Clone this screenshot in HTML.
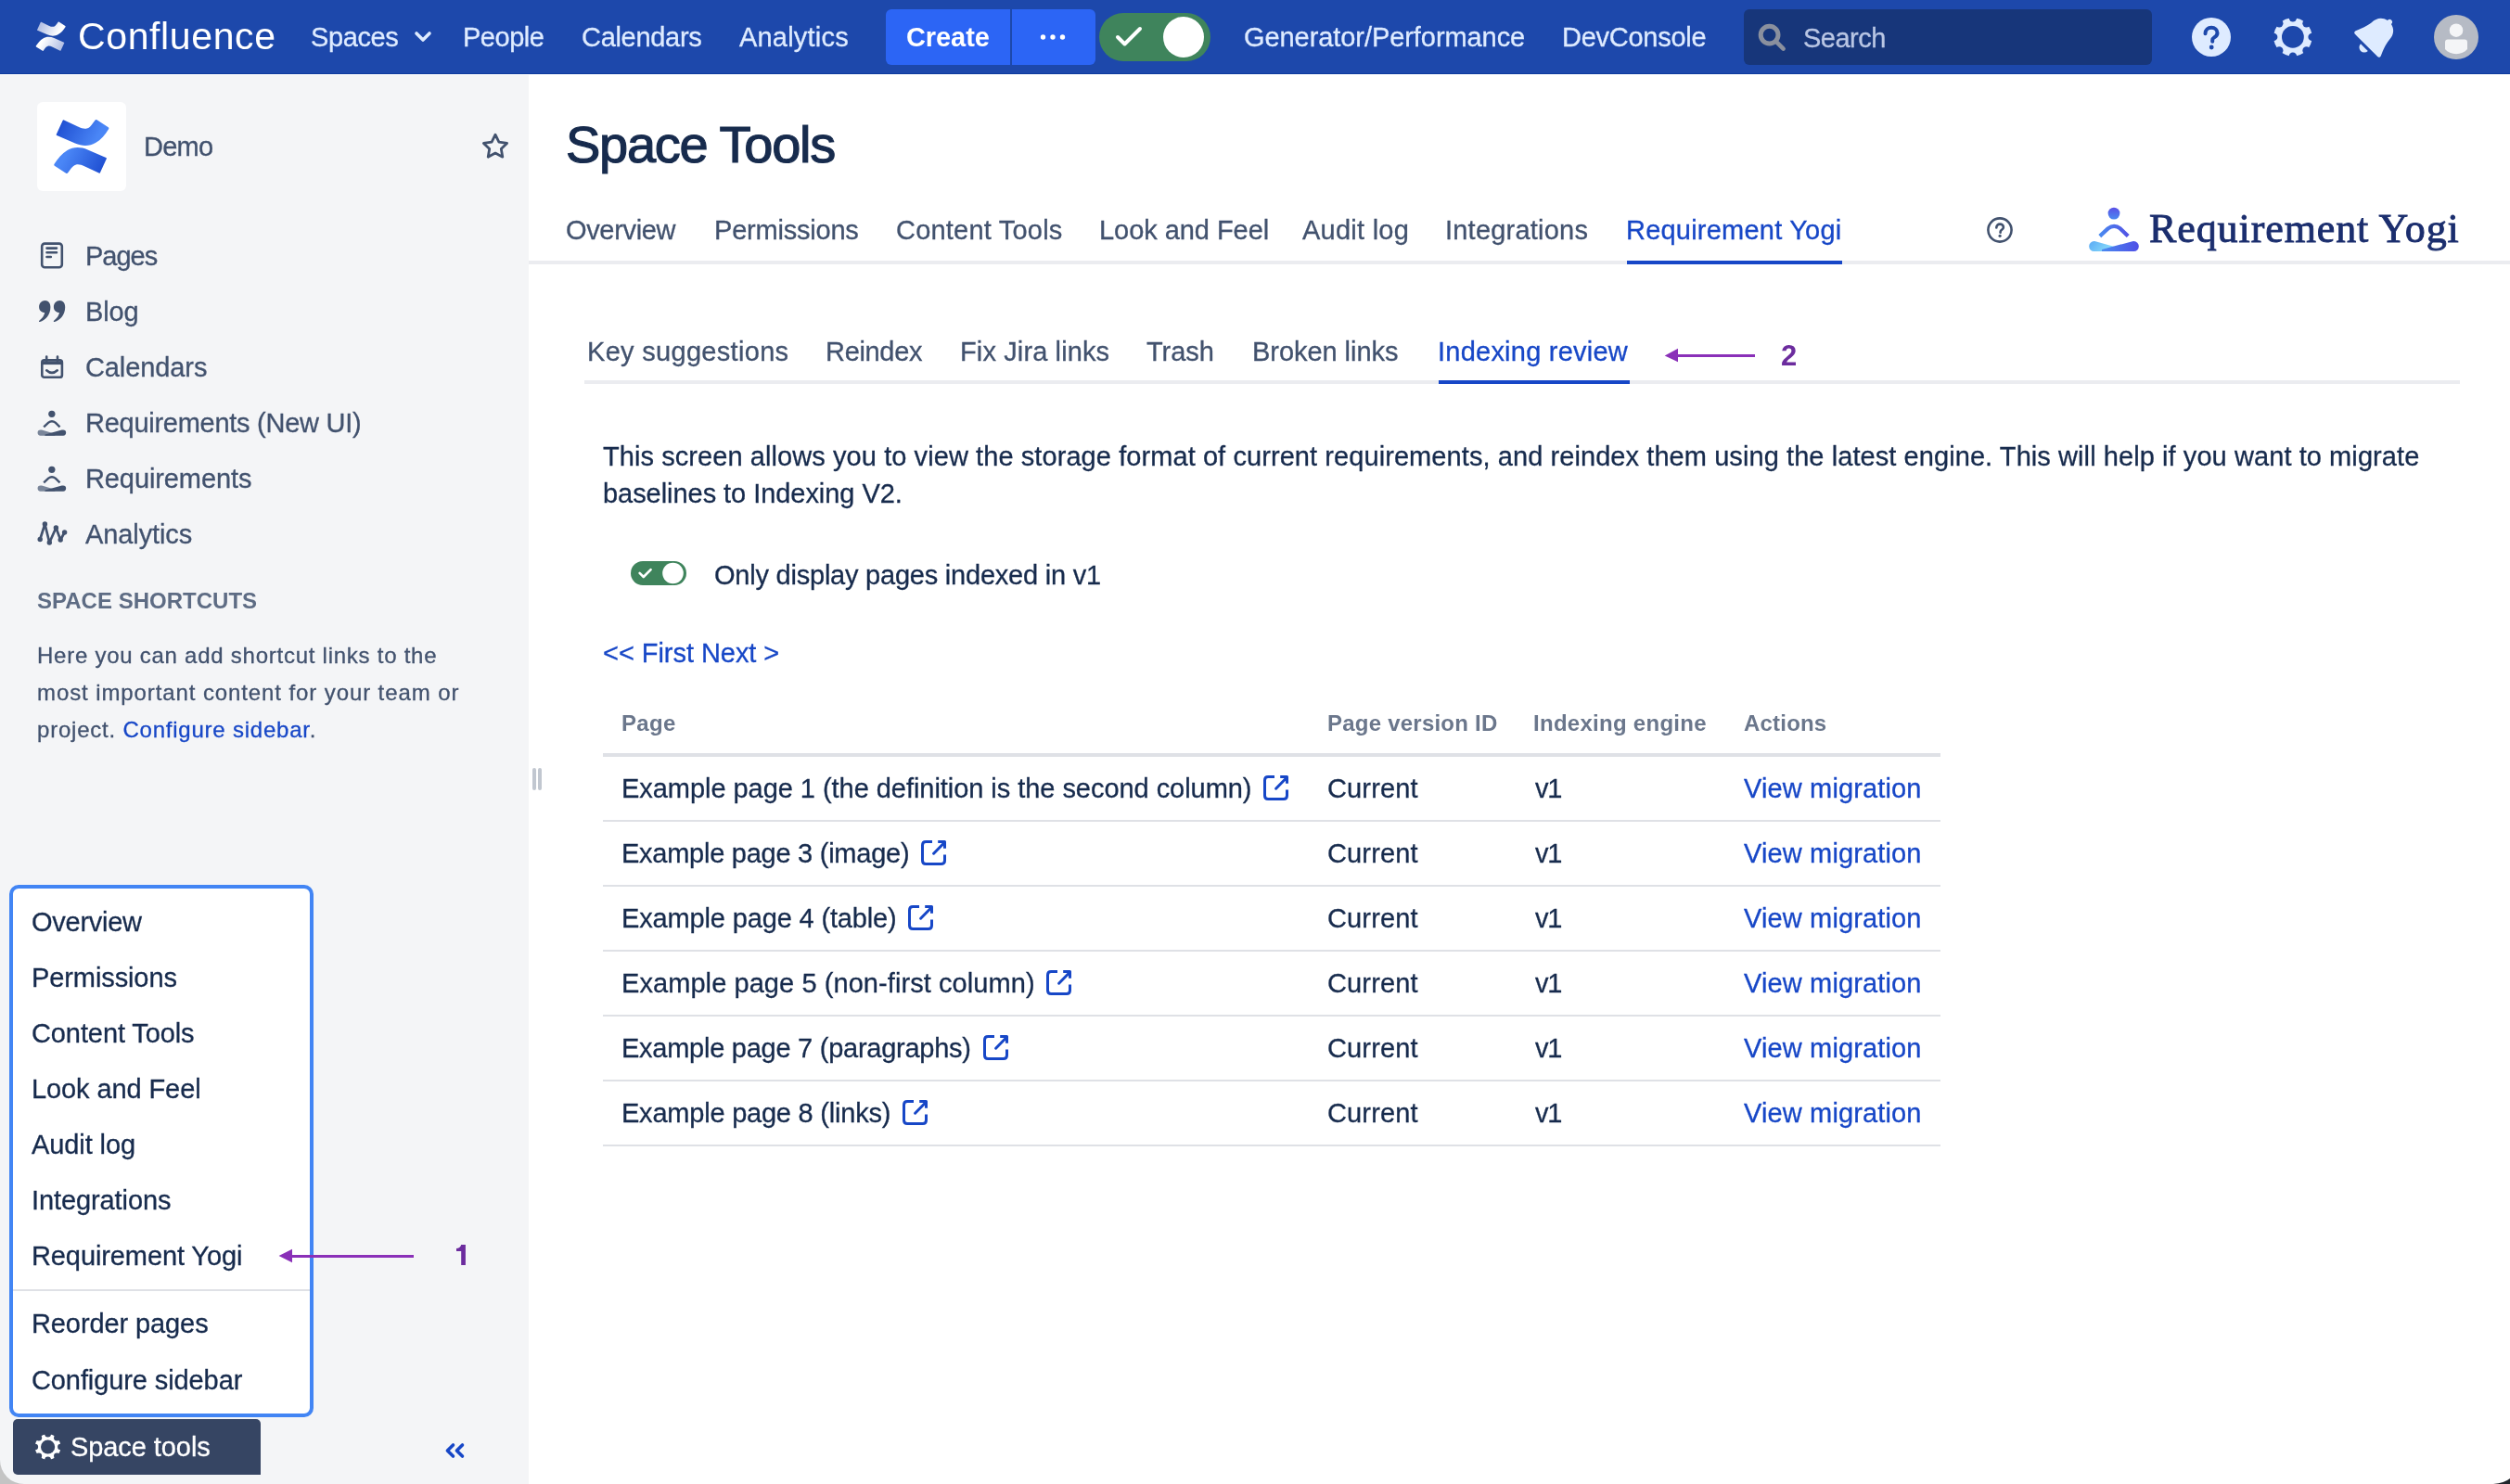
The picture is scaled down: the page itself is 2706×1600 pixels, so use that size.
<!DOCTYPE html><html><head><meta charset="utf-8"><style>*{margin:0;padding:0}html,body{width:2706px;height:1600px;overflow:hidden;background:#fff}
.t{position:absolute;line-height:0;white-space:nowrap;font-family:'Liberation Sans',sans-serif;will-change:transform;-webkit-text-stroke:0.3px currentColor}
.r{position:absolute;display:block}</style></head><body>
<div class="r" style="left:0px;top:0px;width:2706px;height:1600px;background:#FFFFFF;"></div>
<div class="r" style="left:0px;top:80px;width:570px;height:1520px;background:#F4F5F7;"></div>
<div class="r" style="left:0px;top:0px;width:2706px;height:80px;background:#1D48AB;"></div>
<div class="r" style="left:0px;top:79px;width:2706px;height:1px;background:#0D3A9E;"></div>
<div class="r" style="left:0px;top:80px;width:570px;height:1px;background:#FFFFFF;"></div>
<svg class="r" style="left:38px;top:22.6px;width:33px;height:33px" viewBox="0 0 61 61"><defs><linearGradient id="hg" gradientUnits="userSpaceOnUse" x1="8" y1="4" x2="46" y2="24"><stop offset="0" stop-color="#AEBBE2"/><stop offset="1" stop-color="#FFFFFF"/></linearGradient></defs><path fill="url(#hg)" d="M3.7,17.1 L10.7,1.8 Q11.2,1 12,1.4 L27,8.6 C31,10.5 34,11.2 36.5,10.6 C39,10 41,8 43,5 L45.6,1.4 Q46.3,.6 47.1,1.1 L59.8,9.2 Q60.8,9.9 60.2,10.9 C56,17.5 52,22.5 46,26 C40,29.5 32,30 24,26.5 L4.3,18.1 Q3.4,17.7 3.7,17.1 Z"/><g transform="rotate(180 30.8 30)"><path fill="url(#hg)" d="M3.7,17.1 L10.7,1.8 Q11.2,1 12,1.4 L27,8.6 C31,10.5 34,11.2 36.5,10.6 C39,10 41,8 43,5 L45.6,1.4 Q46.3,.6 47.1,1.1 L59.8,9.2 Q60.8,9.9 60.2,10.9 C56,17.5 52,22.5 46,26 C40,29.5 32,30 24,26.5 L4.3,18.1 Q3.4,17.7 3.7,17.1 Z"/></g></svg>
<div class="t" style="left:83.70px;top:39px;font-size:41px;color:#FFFFFF;letter-spacing:0.622px;-webkit-text-stroke:0;">Confluence</div>
<div class="t" style="left:335.30px;top:40px;font-size:29px;color:#DEEBFF;letter-spacing:-0.400px;">Spaces</div>
<svg class="r" style="left:446px;top:33px;width:20px;height:14px" viewBox="0 0 20 14"><path d="M3 3l7 7 7-7" fill="none" stroke="#DEEBFF" stroke-width="3.6" stroke-linecap="round" stroke-linejoin="round"/></svg>
<div class="t" style="left:498.70px;top:40px;font-size:29px;color:#DEEBFF;letter-spacing:-0.480px;">People</div>
<div class="t" style="left:626.70px;top:40px;font-size:29px;color:#DEEBFF;letter-spacing:-0.300px;">Calendars</div>
<div class="t" style="left:796.70px;top:40px;font-size:29px;color:#DEEBFF;letter-spacing:0.200px;">Analytics</div>
<div class="r" style="left:955px;top:10px;width:226px;height:60px;background:#2C65F5;border-radius:6px;"></div>
<div class="r" style="left:1089px;top:10px;width:2px;height:60px;background:#1D48AB;"></div>
<div class="t" style="left:976.70px;top:40px;font-size:29px;color:#FFFFFF;font-weight:700;-webkit-text-stroke:0;letter-spacing:-0.080px;">Create</div>
<svg class="r" style="left:1110px;top:30px;width:50px;height:20px" viewBox="0 0 50 20"><circle cx="14.5" cy="10" r="2.7" fill="#fff"/><circle cx="25" cy="10" r="2.7" fill="#fff"/><circle cx="35.5" cy="10" r="2.7" fill="#fff"/></svg>
<div class="r" style="left:1185px;top:14px;width:120px;height:52px;background:#3F845C;border-radius:26px;"></div>
<svg class="r" style="left:1252px;top:17px;width:48px;height:48px" viewBox="0 0 48 48"><circle cx="24" cy="23" r="22" fill="#fff"/></svg>
<svg class="r" style="left:1198px;top:25px;width:40px;height:30px" viewBox="0 0 40 30"><path d="M7 15l7.5 7.5L31 6" fill="none" stroke="#fff" stroke-width="4" stroke-linecap="round" stroke-linejoin="round"/></svg>
<div class="t" style="left:1340.70px;top:40px;font-size:29px;color:#DEEBFF;letter-spacing:-0.070px;">Generator/Performance</div>
<div class="t" style="left:1684.20px;top:40px;font-size:29px;color:#DEEBFF;letter-spacing:-0.267px;">DevConsole</div>
<div class="r" style="left:1880px;top:10px;width:440px;height:60px;background:#17367A;border-radius:6px;"></div>
<svg class="r" style="left:1890px;top:20px;width:40px;height:40px" viewBox="0 0 40 40"><circle cx="17.6" cy="17.6" r="9.4" fill="none" stroke="#8A909E" stroke-width="5"/><path d="M24.6 24.6l8 8" stroke="#8A909E" stroke-width="4.6" stroke-linecap="round"/></svg>
<div class="t" style="left:1943.70px;top:41px;font-size:29px;color:#B9C6E4;letter-spacing:-0.520px;">Search</div>
<svg class="r" style="left:2362px;top:18px;width:44px;height:44px" viewBox="0 0 44 44"><circle cx="22" cy="22" r="21" fill="#DEEBFF"/><path d="M15.5 18.2c0-4 3-6.4 6.6-6.4 3.7 0 6.4 2.4 6.4 5.6 0 2.6-1.6 3.9-3.4 5-1.3.8-1.9 1.5-1.9 2.9v1.4" fill="none" stroke="#1D48AB" stroke-width="4" stroke-linecap="round"/><circle cx="22.2" cy="33" r="2.4" fill="#1D48AB"/></svg>
<svg class="r" style="left:2446px;top:14px;width:52px;height:52px" viewBox="0 0 52 52"><defs><mask id="gm1"><rect x="0" y="0" width="100" height="100" fill="#fff"/><circle cx="46.60" cy="25.90" r="4.2" fill="#000"/><circle cx="40.54" cy="40.54" r="4.2" fill="#000"/><circle cx="25.90" cy="46.60" r="4.2" fill="#000"/><circle cx="11.26" cy="40.54" r="4.2" fill="#000"/><circle cx="5.20" cy="25.90" r="4.2" fill="#000"/><circle cx="11.26" cy="11.26" r="4.2" fill="#000"/><circle cx="25.90" cy="5.20" r="4.2" fill="#000"/><circle cx="40.54" cy="11.26" r="4.2" fill="#000"/><circle cx="25.9" cy="25.9" r="11.9" fill="#000"/></mask></defs><circle cx="25.9" cy="25.9" r="20.7" fill="#DEEBFF" mask="url(#gm1)"/></svg>
<svg class="r" style="left:2538px;top:10px;width:52px;height:52px" viewBox="0 0 52 52"><g transform="translate(26 26) rotate(45) scale(1.22) translate(-25 -23)"><path fill="#DEEBFF" d="M25 6.5c1.4 0 2.3.9 2.3 2.1v.6c5.4 1.1 8.6 5.4 8.6 11.2C36.3 25 38.6 31 40.6 35.2c.6 1.3.1 2.8-1.5 2.8H10.9c-1.6 0-2.1-1.5-1.5-2.8C11.4 31 13.7 25 14.1 20.4c0-5.8 3.2-10.1 8.6-11.2v-.6c0-1.2.9-2.1 2.3-2.1z"/><path fill="#DEEBFF" d="M20.5 40.5h9a4.5 4.5 0 0 1-9 0z"/></g></svg>
<svg class="r" style="left:2624px;top:16px;width:48px;height:48px" viewBox="0 0 48 48"><circle cx="24" cy="24" r="24" fill="#B6BBC5"/><circle cx="24" cy="16.7" r="7.3" fill="#F4F5F7"/><path d="M12 29.5c0-2 1-3.1 3-3.1h18c2 0 3 1.1 3 3.1v7.5c-2.9 3.3-7 5.2-12 5.2s-9.1-1.9-12-5.2z" fill="#F4F5F7"/></svg>
<div class="r" style="left:40px;top:110px;width:96px;height:96px;background:#FFFFFF;border-radius:6px;"></div>
<svg class="r" style="left:57px;top:128px;width:61px;height:61px" viewBox="0 0 61 61"><defs><linearGradient id="cg" gradientUnits="userSpaceOnUse" x1="8" y1="4" x2="46" y2="24"><stop offset="0" stop-color="#1F4FD2"/><stop offset="1" stop-color="#4A86F6"/></linearGradient></defs><path fill="url(#cg)" d="M3.7,17.1 L10.7,1.8 Q11.2,1 12,1.4 L27,8.6 C31,10.5 34,11.2 36.5,10.6 C39,10 41,8 43,5 L45.6,1.4 Q46.3,.6 47.1,1.1 L59.8,9.2 Q60.8,9.9 60.2,10.9 C56,17.5 52,22.5 46,26 C40,29.5 32,30 24,26.5 L4.3,18.1 Q3.4,17.7 3.7,17.1 Z"/><g transform="rotate(180 30.8 30)"><path fill="url(#cg)" d="M3.7,17.1 L10.7,1.8 Q11.2,1 12,1.4 L27,8.6 C31,10.5 34,11.2 36.5,10.6 C39,10 41,8 43,5 L45.6,1.4 Q46.3,.6 47.1,1.1 L59.8,9.2 Q60.8,9.9 60.2,10.9 C56,17.5 52,22.5 46,26 C40,29.5 32,30 24,26.5 L4.3,18.1 Q3.4,17.7 3.7,17.1 Z"/></g></svg>
<div class="t" style="left:154.50px;top:158px;font-size:29px;color:#42526E;letter-spacing:-0.733px;">Demo</div>
<svg class="r" style="left:516px;top:140px;width:36px;height:36px" viewBox="0 0 36 36"><path d="M18 5.2l3.9 7.9 8.7 1.3-6.3 6.1 1.5 8.7L18 25.1l-7.8 4.1 1.5-8.7-6.3-6.1 8.7-1.3z" fill="none" stroke="#42526E" stroke-width="2.8" stroke-linejoin="round"/></svg>
<div class="t" style="left:92.40px;top:276px;font-size:29px;color:#42526E;letter-spacing:-1.025px;">Pages</div>
<div class="t" style="left:92.40px;top:336px;font-size:29px;color:#42526E;letter-spacing:-0.100px;">Blog</div>
<div class="t" style="left:92.40px;top:396px;font-size:29px;color:#42526E;letter-spacing:-0.100px;">Calendars</div>
<div class="t" style="left:92.40px;top:456px;font-size:29px;color:#42526E;letter-spacing:-0.270px;">Requirements (New UI)</div>
<div class="t" style="left:92.40px;top:516px;font-size:29px;color:#42526E;letter-spacing:-0.100px;">Requirements</div>
<div class="t" style="left:92.40px;top:576px;font-size:29px;color:#42526E;letter-spacing:-0.100px;">Analytics</div>
<svg class="r" style="left:40px;top:258px;width:32px;height:32px" viewBox="0 0 32 32"><rect x="5.2" y="4.6" width="21.6" height="25.6" rx="3" fill="none" stroke="#42526E" stroke-width="2.6"/><path d="M10.5 9.6h10.5M10.5 14.3h10.5M10.5 19h4.3" stroke="#42526E" stroke-width="2.6" stroke-linecap="round"/></svg>
<svg class="r" style="left:40px;top:322px;width:32px;height:28px" viewBox="0 0 32 28"><path fill="#42526E" d="M8.6 2.1c3.6 0 5.8 2.9 5.8 7.2 0 8-5.6 14.4-11.4 15.8-.9.2-1.4-.9-.7-1.4 3-2 5.6-5.5 5.9-8.6-3.5-.3-6.1-2.6-6.1-6.2 0-3.8 2.8-6.8 6.5-6.8zM24.4 2.1c3.6 0 5.8 2.9 5.8 7.2 0 8-5.6 14.4-11.4 15.8-.9.2-1.4-.9-.7-1.4 3-2 5.6-5.5 5.9-8.6-3.5-.3-6.1-2.6-6.1-6.2 0-3.8 2.8-6.8 6.5-6.8z"/></svg>
<svg class="r" style="left:40px;top:380px;width:32px;height:32px" viewBox="0 0 32 32"><rect x="5.3" y="8.4" width="21.6" height="18.4" rx="2.4" fill="none" stroke="#42526E" stroke-width="2.6"/><path d="M5.3 9.5h21.6v3.6H5.3z" fill="#42526E"/><path d="M10.2 4.6v4.6M22 4.6v4.6" stroke="#42526E" stroke-width="2.6" stroke-linecap="round"/><path d="M10.2 19.3Q16 24.6 21.8 19.3" fill="none" stroke="#42526E" stroke-width="2.6" stroke-linecap="round"/></svg>
<svg class="r" style="left:38px;top:440px;width:36px;height:32px" viewBox="0 0 36 32"><g transform="translate(1.9,2.3) scale(0.57)"><circle cx="28" cy="7.1" r="6.4" fill="#42526E"/><path d="M12.8 31.6L21.6 23.4Q28.2 18.2 34.8 23.4L43.2 31.6" fill="none" stroke="#42526E" stroke-width="4.2" stroke-linejoin="round"/><path d="M6.6 37.1Q7.6 37 9 37.4L34 44.5 34 48 6.6 48A5.45 5.45 0 0 1 6.6 37.1Z" fill="#7A869A"/><path d="M49.4 37.1Q48.4 37 47 37.4L15 46 15 48 49.4 48A5.45 5.45 0 0 0 49.4 37.1Z" fill="#42526E"/></g></svg>
<svg class="r" style="left:38px;top:500px;width:36px;height:32px" viewBox="0 0 36 32"><g transform="translate(1.9,2.3) scale(0.57)"><circle cx="28" cy="7.1" r="6.4" fill="#42526E"/><path d="M12.8 31.6L21.6 23.4Q28.2 18.2 34.8 23.4L43.2 31.6" fill="none" stroke="#42526E" stroke-width="4.2" stroke-linejoin="round"/><path d="M6.6 37.1Q7.6 37 9 37.4L34 44.5 34 48 6.6 48A5.45 5.45 0 0 1 6.6 37.1Z" fill="#7A869A"/><path d="M49.4 37.1Q48.4 37 47 37.4L15 46 15 48 49.4 48A5.45 5.45 0 0 0 49.4 37.1Z" fill="#42526E"/></g></svg>
<svg class="r" style="left:38px;top:560px;width:36px;height:32px" viewBox="0 0 36 32"><path d="M5.2 21.5L10.4 5 15.3 25 22.4 9 27.2 22 31.6 14" fill="none" stroke="#42526E" stroke-width="2.7" stroke-linecap="round" stroke-linejoin="round"/><circle cx="5.2" cy="21.5" r="2.7" fill="#42526E"/><circle cx="10.4" cy="5" r="2.7" fill="#42526E"/><circle cx="15.3" cy="25" r="2.7" fill="#42526E"/><circle cx="22.4" cy="9" r="2.7" fill="#42526E"/><circle cx="27.2" cy="22" r="2.7" fill="#42526E"/><circle cx="31.6" cy="14" r="2.7" fill="#42526E"/></svg>
<div class="t" style="left:39.70px;top:648px;font-size:24px;color:#5E6C84;font-weight:700;-webkit-text-stroke:0;letter-spacing:0.014px;">SPACE SHORTCUTS</div>
<div class="t" style="left:39.70px;top:707px;font-size:24px;color:#42526E;letter-spacing:0.746px;">Here you can add shortcut links to the</div>
<div class="t" style="left:39.70px;top:747px;font-size:24px;color:#42526E;letter-spacing:0.900px;">most important content for your team or</div>
<div class="t" style="left:39.50px;top:787px;font-size:24px;color:#42526E;letter-spacing:0.78px">project. <span style="color:#1747C7">Configure sidebar</span>.</div>
<div class="r" style="left:574px;top:828px;width:4px;height:24px;background:#C1C7D0;border-radius:2px;"></div>
<div class="r" style="left:580px;top:828px;width:4px;height:24px;background:#C1C7D0;border-radius:2px;"></div>
<div class="r" style="left:10px;top:954px;width:328px;height:574px;background:#FFFFFF;border-radius:10px;box-sizing:border-box;border:4px solid #4285F4;"></div>
<div class="t" style="left:33.70px;top:994px;font-size:29px;color:#172B4D;letter-spacing:-0.257px;">Overview</div>
<div class="t" style="left:33.70px;top:1054px;font-size:29px;color:#172B4D;letter-spacing:-0.100px;">Permissions</div>
<div class="t" style="left:33.70px;top:1114px;font-size:29px;color:#172B4D;letter-spacing:-0.100px;">Content Tools</div>
<div class="t" style="left:33.70px;top:1174px;font-size:29px;color:#172B4D;letter-spacing:-0.100px;">Look and Feel</div>
<div class="t" style="left:33.70px;top:1234px;font-size:29px;color:#172B4D;letter-spacing:-0.100px;">Audit log</div>
<div class="t" style="left:33.70px;top:1294px;font-size:29px;color:#172B4D;letter-spacing:-0.100px;">Integrations</div>
<div class="t" style="left:33.70px;top:1354px;font-size:29px;color:#172B4D;letter-spacing:-0.100px;">Requirement Yogi</div>
<div class="t" style="left:33.70px;top:1427px;font-size:29px;color:#172B4D;letter-spacing:-0.100px;">Reorder pages</div>
<div class="t" style="left:33.70px;top:1488px;font-size:29px;color:#172B4D;letter-spacing:-0.100px;">Configure sidebar</div>
<div class="r" style="left:14px;top:1390px;width:320px;height:2px;background:#DFE1E6;"></div>
<div class="r" style="left:14px;top:1530px;width:267px;height:60px;background:#364563;border-radius:5px 5px 0 5px;"></div>
<svg class="r" style="left:32px;top:1540px;width:40px;height:40px" viewBox="0 0 40 40"><defs><mask id="gm2"><rect x="0" y="0" width="100" height="100" fill="#fff"/><circle cx="33.40" cy="20.00" r="3.3" fill="#000"/><circle cx="29.36" cy="29.76" r="3.3" fill="#000"/><circle cx="19.60" cy="33.80" r="3.3" fill="#000"/><circle cx="9.84" cy="29.76" r="3.3" fill="#000"/><circle cx="5.80" cy="20.00" r="3.3" fill="#000"/><circle cx="9.84" cy="10.24" r="3.3" fill="#000"/><circle cx="19.60" cy="6.20" r="3.3" fill="#000"/><circle cx="29.36" cy="10.24" r="3.3" fill="#000"/><circle cx="19.6" cy="20" r="7.6" fill="#000"/></mask></defs><circle cx="19.6" cy="20" r="13.8" fill="#FFFFFF" mask="url(#gm2)"/></svg>
<div class="t" style="left:75.50px;top:1560px;font-size:29px;color:#FFFFFF;letter-spacing:-0.080px;">Space tools</div>
<svg class="r" style="left:476px;top:1552px;width:28px;height:24px" viewBox="0 0 28 24"><path d="M12.5 6L6.4 12 12.5 18M22.5 6L16.4 12 22.5 18" fill="none" stroke="#1747C7" stroke-width="3.6" stroke-linecap="round" stroke-linejoin="round"/></svg>
<div class="r" style="left:313px;top:1352.8px;width:133px;height:3.2000000000000455px;background:#8A30B8;"></div>
<svg class="r" style="left:300px;top:1346px;width:16px;height:16px" viewBox="0 0 16 16"><path d="M0.6 8L15 0.7V15.3Z" fill="#8A30B8"/></svg>
<svg class="r" style="left:490px;top:1340px;width:14px;height:26px" viewBox="0 0 14 26"><path d="M7.2 2H11.9V23.9H7.2V8.9H2V6.1C4.6 6.1 6.5 4.6 7.2 2Z" fill="#6C2C9E"/></svg>
<div class="t" style="left:610.20px;top:156px;font-size:56px;color:#172B4D;letter-spacing:-1.290px;-webkit-text-stroke:1.2px #172B4D;">Space Tools</div>
<div class="t" style="left:609.70px;top:248px;font-size:29px;color:#42526E;letter-spacing:-0.343px;">Overview</div>
<div class="t" style="left:770.00px;top:248px;font-size:29px;color:#42526E;letter-spacing:-0.210px;">Permissions</div>
<div class="t" style="left:965.70px;top:248px;font-size:29px;color:#42526E;letter-spacing:0.208px;">Content Tools</div>
<div class="t" style="left:1184.70px;top:248px;font-size:29px;color:#42526E;letter-spacing:-0.050px;">Look and Feel</div>
<div class="t" style="left:1404.30px;top:248px;font-size:29px;color:#42526E;letter-spacing:0.250px;">Audit log</div>
<div class="t" style="left:1558.20px;top:248px;font-size:29px;color:#42526E;letter-spacing:0.218px;">Integrations</div>
<div class="t" style="left:1752.70px;top:248px;font-size:29px;color:#1747C7;letter-spacing:0.220px;">Requirement Yogi</div>
<div class="r" style="left:570px;top:281px;width:2136px;height:4px;background:#EBECF0;"></div>
<div class="r" style="left:1754px;top:281px;width:232px;height:4px;background:#1747C7;"></div>
<svg class="r" style="left:2141px;top:233px;width:30px;height:30px" viewBox="0 0 30 30"><circle cx="15" cy="15" r="12.6" fill="none" stroke="#42526E" stroke-width="2.6"/><path d="M11.3 12.4c0-2.3 1.7-3.8 3.8-3.8s3.8 1.4 3.8 3.4c0 1.6-1 2.3-2 2.9-.8.5-1.3 1-1.3 2v.8" fill="none" stroke="#42526E" stroke-width="2.6" stroke-linecap="round"/><circle cx="15.1" cy="21.3" r="1.6" fill="#42526E"/></svg>
<svg class="r" style="left:2251px;top:223px;width:56px;height:49px" viewBox="0 0 56 49"><defs><linearGradient id="yh" x1="0" y1="0" x2="0" y2="1"><stop offset="0" stop-color="#5A4FE6"/><stop offset="1" stop-color="#4A8AF0"/></linearGradient><linearGradient id="ya" x1="0" y1="0" x2="1" y2="0"><stop offset="0" stop-color="#4A8AF0"/><stop offset="1" stop-color="#5252E4"/></linearGradient><linearGradient id="yl" x1="0" y1="0" x2="1" y2="0.3"><stop offset="0" stop-color="#5AAAF5"/><stop offset="1" stop-color="#90E4FA"/></linearGradient><linearGradient id="yr" x1="0" y1="0" x2="1" y2="0"><stop offset="0" stop-color="#4A8AF0"/><stop offset="1" stop-color="#4F4FE6"/></linearGradient></defs><g transform="translate(0,0) scale(1)"><circle cx="28" cy="7.1" r="6.4" fill="url(#yh)"/><path d="M12.8 31.6L21.6 23.4Q28.2 18.2 34.8 23.4L43.2 31.6" fill="none" stroke="url(#ya)" stroke-width="4.2" stroke-linejoin="round"/><path d="M6.6 37.1Q7.6 37 9 37.4L34 44.5 34 48 6.6 48A5.45 5.45 0 0 1 6.6 37.1Z" fill="url(#yl)"/><path d="M49.4 37.1Q48.4 37 47 37.4L15 46 15 48 49.4 48A5.45 5.45 0 0 0 49.4 37.1Z" fill="url(#yr)"/></g></svg>
<div class="t" style="left:2317.20px;top:247px;font-size:44px;color:#1B2E6E;font-family:'Liberation Serif', serif;letter-spacing:0.907px;-webkit-text-stroke:0.9px #1B2E6E;">Requirement Yogi</div>
<div class="t" style="left:633.00px;top:379px;font-size:29px;color:#42526E;letter-spacing:0.307px;">Key suggestions</div>
<div class="t" style="left:890.20px;top:379px;font-size:29px;color:#42526E;letter-spacing:-0.317px;">Reindex</div>
<div class="t" style="left:1035.20px;top:379px;font-size:29px;color:#42526E;letter-spacing:0.123px;">Fix Jira links</div>
<div class="t" style="left:1235.70px;top:379px;font-size:29px;color:#42526E;letter-spacing:-0.050px;">Trash</div>
<div class="t" style="left:1349.70px;top:379px;font-size:29px;color:#42526E;letter-spacing:-0.050px;">Broken links</div>
<div class="t" style="left:1549.70px;top:379px;font-size:29px;color:#1747C7;letter-spacing:0.236px;">Indexing review</div>
<div class="r" style="left:630px;top:410px;width:2022px;height:4px;background:#EBECF0;"></div>
<div class="r" style="left:1551px;top:410px;width:206px;height:4px;background:#1747C7;"></div>
<div class="r" style="left:1808px;top:382px;width:84px;height:3px;background:#8A30B8;"></div>
<svg class="r" style="left:1794px;top:375px;width:16px;height:16px" viewBox="0 0 16 16"><path d="M0.7 8.5L15 0.7V15.2Z" fill="#8A30B8"/></svg>
<div class="t" style="left:1919.70px;top:384px;font-size:31px;color:#6C2C9E;font-weight:700;-webkit-text-stroke:0;">2</div>
<div class="t" style="left:649.70px;top:492px;font-size:29px;color:#172B4D;letter-spacing:0.076px;">This screen allows you to view the storage format of current requirements, and reindex them using the latest engine. This will help if you want to migrate</div>
<div class="t" style="left:649.70px;top:532px;font-size:29px;color:#172B4D;letter-spacing:-0.050px;">baselines to Indexing V2.</div>
<div class="r" style="left:680px;top:605px;width:60px;height:26px;background:#3F845C;border-radius:13px;"></div>
<svg class="r" style="left:713px;top:606px;width:24px;height:24px" viewBox="0 0 24 24"><circle cx="12.5" cy="12" r="11.3" fill="#fff"/></svg>
<svg class="r" style="left:684px;top:608px;width:24px;height:20px" viewBox="0 0 24 20"><path d="M5.6 9.8l4.2 4.2 7.8-7.8" fill="none" stroke="#fff" stroke-width="2.6" stroke-linecap="round" stroke-linejoin="round"/></svg>
<div class="t" style="left:769.70px;top:619.5px;font-size:29px;color:#172B4D;letter-spacing:-0.223px;">Only display pages indexed in v1</div>
<div class="t" style="left:649.70px;top:704px;font-size:29px;color:#1747C7;letter-spacing:-0.050px;">&lt;&lt; First Next &gt;</div>
<div class="t" style="left:669.70px;top:780px;font-size:24px;color:#6B778C;font-weight:700;-webkit-text-stroke:0;letter-spacing:0.300px;">Page</div>
<div class="t" style="left:1430.70px;top:780px;font-size:24px;color:#6B778C;font-weight:700;-webkit-text-stroke:0;letter-spacing:0.229px;">Page version ID</div>
<div class="t" style="left:1653.40px;top:780px;font-size:24px;color:#6B778C;font-weight:700;-webkit-text-stroke:0;letter-spacing:0.279px;">Indexing engine</div>
<div class="t" style="left:1880.10px;top:780px;font-size:24px;color:#6B778C;font-weight:700;-webkit-text-stroke:0;letter-spacing:0.200px;">Actions</div>
<div class="r" style="left:650px;top:812px;width:1442px;height:4px;background:#DFE1E6;"></div>
<div class="t" style="left:669.70px;top:850px;font-size:29px;color:#172B4D;letter-spacing:-0.047px;">Example page 1 (the definition is the second column)</div>
<svg class="r" style="left:1362px;top:836px;width:27px;height:27px" viewBox="0 0 27 27"><path d="M12 1.5H5.2Q1.5 1.5 1.5 5.2V21.8Q1.5 25.5 5.2 25.5H21.8Q25.5 25.5 25.5 21.8V15.6" fill="none" stroke="#1747C7" stroke-width="3" stroke-linejoin="round"/><path d="M13.6 14.2L24.6 3" fill="none" stroke="#1747C7" stroke-width="3" stroke-linecap="round"/><path d="M18.2 1.5H25.5V8.8" fill="none" stroke="#1747C7" stroke-width="3" stroke-linejoin="round"/></svg>
<div class="t" style="left:1430.70px;top:850px;font-size:29px;color:#172B4D;letter-spacing:0.133px;">Current</div>
<div class="t" style="left:1654.70px;top:850px;font-size:29px;color:#172B4D;letter-spacing:-1.150px;">v1</div>
<div class="t" style="left:1880.10px;top:850px;font-size:29px;color:#1747C7;letter-spacing:0.138px;">View migration</div>
<div class="r" style="left:650px;top:884px;width:1442px;height:2px;background:#DFE1E6;"></div>
<div class="t" style="left:669.70px;top:920px;font-size:29px;color:#172B4D;letter-spacing:-0.257px;">Example page 3 (image)</div>
<svg class="r" style="left:993px;top:906px;width:27px;height:27px" viewBox="0 0 27 27"><path d="M12 1.5H5.2Q1.5 1.5 1.5 5.2V21.8Q1.5 25.5 5.2 25.5H21.8Q25.5 25.5 25.5 21.8V15.6" fill="none" stroke="#1747C7" stroke-width="3" stroke-linejoin="round"/><path d="M13.6 14.2L24.6 3" fill="none" stroke="#1747C7" stroke-width="3" stroke-linecap="round"/><path d="M18.2 1.5H25.5V8.8" fill="none" stroke="#1747C7" stroke-width="3" stroke-linejoin="round"/></svg>
<div class="t" style="left:1430.70px;top:920px;font-size:29px;color:#172B4D;letter-spacing:0.133px;">Current</div>
<div class="t" style="left:1654.70px;top:920px;font-size:29px;color:#172B4D;letter-spacing:-1.150px;">v1</div>
<div class="t" style="left:1880.10px;top:920px;font-size:29px;color:#1747C7;letter-spacing:0.138px;">View migration</div>
<div class="r" style="left:650px;top:954px;width:1442px;height:2px;background:#DFE1E6;"></div>
<div class="t" style="left:669.70px;top:990px;font-size:29px;color:#172B4D;letter-spacing:-0.148px;">Example page 4 (table)</div>
<svg class="r" style="left:979px;top:976px;width:27px;height:27px" viewBox="0 0 27 27"><path d="M12 1.5H5.2Q1.5 1.5 1.5 5.2V21.8Q1.5 25.5 5.2 25.5H21.8Q25.5 25.5 25.5 21.8V15.6" fill="none" stroke="#1747C7" stroke-width="3" stroke-linejoin="round"/><path d="M13.6 14.2L24.6 3" fill="none" stroke="#1747C7" stroke-width="3" stroke-linecap="round"/><path d="M18.2 1.5H25.5V8.8" fill="none" stroke="#1747C7" stroke-width="3" stroke-linejoin="round"/></svg>
<div class="t" style="left:1430.70px;top:990px;font-size:29px;color:#172B4D;letter-spacing:0.133px;">Current</div>
<div class="t" style="left:1654.70px;top:990px;font-size:29px;color:#172B4D;letter-spacing:-1.150px;">v1</div>
<div class="t" style="left:1880.10px;top:990px;font-size:29px;color:#1747C7;letter-spacing:0.138px;">View migration</div>
<div class="r" style="left:650px;top:1024px;width:1442px;height:2px;background:#DFE1E6;"></div>
<div class="t" style="left:669.70px;top:1060px;font-size:29px;color:#172B4D;letter-spacing:0.072px;">Example page 5 (non-first column)</div>
<svg class="r" style="left:1128px;top:1046px;width:27px;height:27px" viewBox="0 0 27 27"><path d="M12 1.5H5.2Q1.5 1.5 1.5 5.2V21.8Q1.5 25.5 5.2 25.5H21.8Q25.5 25.5 25.5 21.8V15.6" fill="none" stroke="#1747C7" stroke-width="3" stroke-linejoin="round"/><path d="M13.6 14.2L24.6 3" fill="none" stroke="#1747C7" stroke-width="3" stroke-linecap="round"/><path d="M18.2 1.5H25.5V8.8" fill="none" stroke="#1747C7" stroke-width="3" stroke-linejoin="round"/></svg>
<div class="t" style="left:1430.70px;top:1060px;font-size:29px;color:#172B4D;letter-spacing:0.133px;">Current</div>
<div class="t" style="left:1654.70px;top:1060px;font-size:29px;color:#172B4D;letter-spacing:-1.150px;">v1</div>
<div class="t" style="left:1880.10px;top:1060px;font-size:29px;color:#1747C7;letter-spacing:0.138px;">View migration</div>
<div class="r" style="left:650px;top:1094px;width:1442px;height:2px;background:#DFE1E6;"></div>
<div class="t" style="left:669.70px;top:1130px;font-size:29px;color:#172B4D;letter-spacing:-0.258px;">Example page 7 (paragraphs)</div>
<svg class="r" style="left:1060px;top:1116px;width:27px;height:27px" viewBox="0 0 27 27"><path d="M12 1.5H5.2Q1.5 1.5 1.5 5.2V21.8Q1.5 25.5 5.2 25.5H21.8Q25.5 25.5 25.5 21.8V15.6" fill="none" stroke="#1747C7" stroke-width="3" stroke-linejoin="round"/><path d="M13.6 14.2L24.6 3" fill="none" stroke="#1747C7" stroke-width="3" stroke-linecap="round"/><path d="M18.2 1.5H25.5V8.8" fill="none" stroke="#1747C7" stroke-width="3" stroke-linejoin="round"/></svg>
<div class="t" style="left:1430.70px;top:1130px;font-size:29px;color:#172B4D;letter-spacing:0.133px;">Current</div>
<div class="t" style="left:1654.70px;top:1130px;font-size:29px;color:#172B4D;letter-spacing:-1.150px;">v1</div>
<div class="t" style="left:1880.10px;top:1130px;font-size:29px;color:#1747C7;letter-spacing:0.138px;">View migration</div>
<div class="r" style="left:650px;top:1164px;width:1442px;height:2px;background:#DFE1E6;"></div>
<div class="t" style="left:669.70px;top:1200px;font-size:29px;color:#172B4D;letter-spacing:-0.219px;">Example page 8 (links)</div>
<svg class="r" style="left:973px;top:1186px;width:27px;height:27px" viewBox="0 0 27 27"><path d="M12 1.5H5.2Q1.5 1.5 1.5 5.2V21.8Q1.5 25.5 5.2 25.5H21.8Q25.5 25.5 25.5 21.8V15.6" fill="none" stroke="#1747C7" stroke-width="3" stroke-linejoin="round"/><path d="M13.6 14.2L24.6 3" fill="none" stroke="#1747C7" stroke-width="3" stroke-linecap="round"/><path d="M18.2 1.5H25.5V8.8" fill="none" stroke="#1747C7" stroke-width="3" stroke-linejoin="round"/></svg>
<div class="t" style="left:1430.70px;top:1200px;font-size:29px;color:#172B4D;letter-spacing:0.133px;">Current</div>
<div class="t" style="left:1654.70px;top:1200px;font-size:29px;color:#172B4D;letter-spacing:-1.150px;">v1</div>
<div class="t" style="left:1880.10px;top:1200px;font-size:29px;color:#1747C7;letter-spacing:0.138px;">View migration</div>
<div class="r" style="left:650px;top:1234px;width:1442px;height:2px;background:#DFE1E6;"></div>
<svg class="r" style="left:0px;top:1574px;width:26px;height:26px" viewBox="0 0 26 26"><path d="M0 0A26 26 0 0 0 26 26H0Z" fill="#C4C4C4"/></svg>
<svg class="r" style="left:2682px;top:1590px;width:24px;height:10px" viewBox="0 0 24 10"><path d="M6 10Q18 9 24 4V10Z" fill="#22262C"/></svg>
</body></html>
